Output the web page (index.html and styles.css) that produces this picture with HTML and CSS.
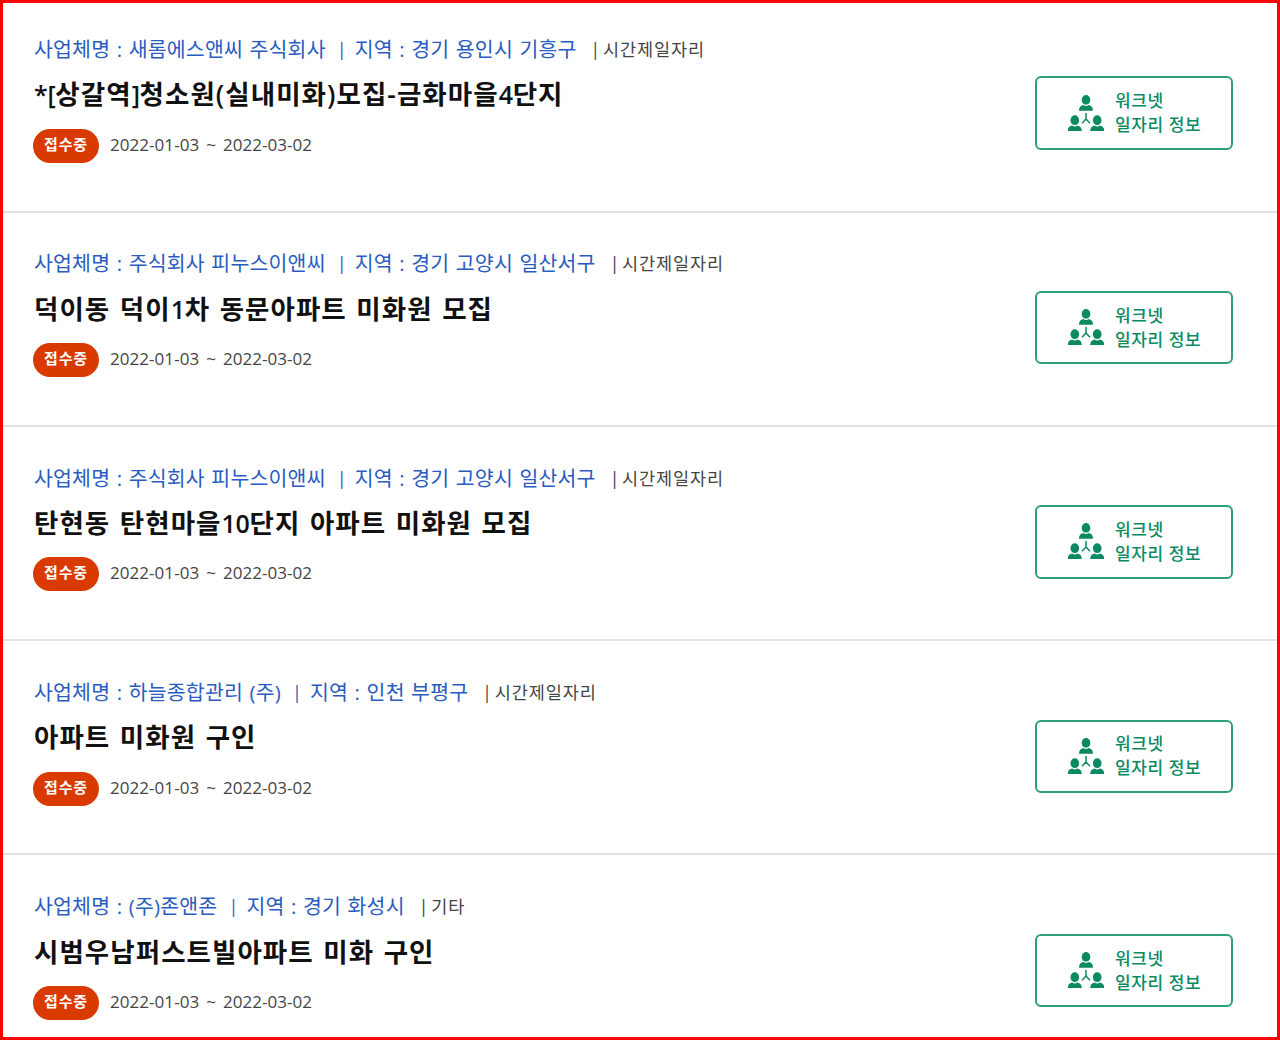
FILE: index.html
```html
<!DOCTYPE html>
<html lang="ko">
<head>
  <meta charset="utf-8">
  <title>채용정보</title>
  <link rel="stylesheet" href="styles.css">
</head>
<body>
  <svg class="sprite" width="0" height="0">
    <symbol id="people" viewBox="0 0 36 37">
      <g id="person">
        <ellipse cx="18" cy="4.9" rx="4.3" ry="4.9"/>
        <path d="M11 15.7c0-3.2 1.4-4.9 4.4-5.6q2.6 2 5.2 0c3 .7 4.4 2.4 4.4 5.6z"/>
      </g>
      <use href="#person" x="-11.2" y="20.3"/>
      <use href="#person" x="11.2" y="20.3"/>
      <path d="M18 18v6l-4 4.2M18 24l4 4.2" fill="none" stroke="currentColor" stroke-width="1.5"/>
    </symbol>
  </svg>
  <ul class="list">
    <li class="item">
      <div class="info">
        <p class="meta"><span>사업체명 : 새롬에스앤씨 주식회사</span><i class="bar">|</i><span>지역 : 경기 용인시 기흥구</span><em class="type">| 시간제일자리</em></p>
        <h3 class="title"><span class="num">*[</span>상갈역<span class="num">]</span>청소원(실내미화)모집-금화마을<span class="num">4</span>단지</h3>
        <p class="period"><span class="state">접수중</span><span class="date">2022-01-03 ~ 2022-03-02</span></p>
      </div>
      <a class="btn"><svg class="icon"><use href="#people"/></svg><span>워크넷<br>일자리 정보</span></a>
    </li>
    <li class="item">
      <div class="info">
        <p class="meta"><span>사업체명 : 주식회사 피누스이앤씨</span><i class="bar">|</i><span>지역 : 경기 고양시 일산서구</span><em class="type">| 시간제일자리</em></p>
        <h3 class="title">덕이동 덕이<span class="num">1</span>차 동문아파트 미화원 모집</h3>
        <p class="period"><span class="state">접수중</span><span class="date">2022-01-03 ~ 2022-03-02</span></p>
      </div>
      <a class="btn"><svg class="icon"><use href="#people"/></svg><span>워크넷<br>일자리 정보</span></a>
    </li>
    <li class="item">
      <div class="info">
        <p class="meta"><span>사업체명 : 주식회사 피누스이앤씨</span><i class="bar">|</i><span>지역 : 경기 고양시 일산서구</span><em class="type">| 시간제일자리</em></p>
        <h3 class="title">탄현동 탄현마을<span class="num">10</span>단지 아파트 미화원 모집</h3>
        <p class="period"><span class="state">접수중</span><span class="date">2022-01-03 ~ 2022-03-02</span></p>
      </div>
      <a class="btn"><svg class="icon"><use href="#people"/></svg><span>워크넷<br>일자리 정보</span></a>
    </li>
    <li class="item">
      <div class="info">
        <p class="meta"><span>사업체명 : 하늘종합관리 (주)</span><i class="bar">|</i><span>지역 : 인천 부평구</span><em class="type">| 시간제일자리</em></p>
        <h3 class="title">아파트 미화원 구인</h3>
        <p class="period"><span class="state">접수중</span><span class="date">2022-01-03 ~ 2022-03-02</span></p>
      </div>
      <a class="btn"><svg class="icon"><use href="#people"/></svg><span>워크넷<br>일자리 정보</span></a>
    </li>
    <li class="item">
      <div class="info">
        <p class="meta"><span>사업체명 : (주)존앤존</span><i class="bar">|</i><span>지역 : 경기 화성시</span><em class="type">| 기타</em></p>
        <h3 class="title">시범우남퍼스트빌아파트 미화 구인</h3>
        <p class="period"><span class="state">접수중</span><span class="date">2022-01-03 ~ 2022-03-02</span></p>
      </div>
      <a class="btn"><svg class="icon"><use href="#people"/></svg><span>워크넷<br>일자리 정보</span></a>
    </li>
  </ul>
</body>
</html>
```
FILE: styles.css
```css
* {
  box-sizing: border-box;
  margin: 0;
  padding: 0;
}
body {
  background: #fff;
  font-family: "Open Sans", "Noto Sans CJK KR", sans-serif;
}
.sprite {
  display: block;
}
.list {
  height: 1040px;
  border: 3px solid #f00;
  overflow: hidden;
  list-style: none;
}
.item {
  display: flex;
  justify-content: space-between;
  align-items: flex-start;
  height: 214.3px;
  padding: 35.9px 44px 0 31px;
  border-bottom: 2px solid #e1e1e1;
}
.item:first-child {
  height: 209.5px;
  padding-top: 30.9px;
}
.item:last-child {
  border-bottom: 0;
}
.meta {
  display: flex;
  height: 30px;
  line-height: 30px;
  font-size: 20.5px;
  letter-spacing: .2px;
  word-spacing: .9px;
  color: #2a5cc0;
  white-space: nowrap;
}
.bar {
  width: 29px;
  padding-left: 3px;
  text-align: center;
  font-size: 18px;
  font-style: normal;
}
.type {
  margin-left: 14px;
  font-size: 17.5px;
  font-style: normal;
  letter-spacing: .9px;
  word-spacing: -3.5px;
  color: #444;
}
.title {
  height: 40px;
  margin-top: 10.4px;
  line-height: 40px;
  font-size: 26.5px;
  font-weight: 600;
  letter-spacing: 1.05px;
  word-spacing: 1.6px;
  color: #111;
  white-space: nowrap;
}
.num {
  font-size: 25px;
  letter-spacing: -.3px;
}
.period {
  display: flex;
  margin: 14.4px 0 0 -1px;
}
.state {
  width: 66px;
  height: 34px;
  border-radius: 17px;
  background: #d93a00;
  line-height: 31px;
  text-align: center;
  font-size: 15px;
  font-weight: 600;
  letter-spacing: .8px;
  color: #fff;
}
.date {
  margin-left: 11px;
  line-height: 31px;
  font-size: 17px;
  letter-spacing: .05px;
  word-spacing: 2.5px;
  color: #444;
}
.btn {
  display: flex;
  align-items: center;
  width: 198px;
  height: 73.4px;
  margin-top: 42.6px;
  padding-left: 31px;
  border: 2px solid #2f9f7b;
  border-radius: 6px;
  color: #0b8a62;
  font-size: 17px;
  font-weight: 500;
  line-height: 24px;
  letter-spacing: .6px;
}
.icon {
  width: 36px;
  height: 37px;
  margin-right: 11px;
  fill: currentColor;
}
```
